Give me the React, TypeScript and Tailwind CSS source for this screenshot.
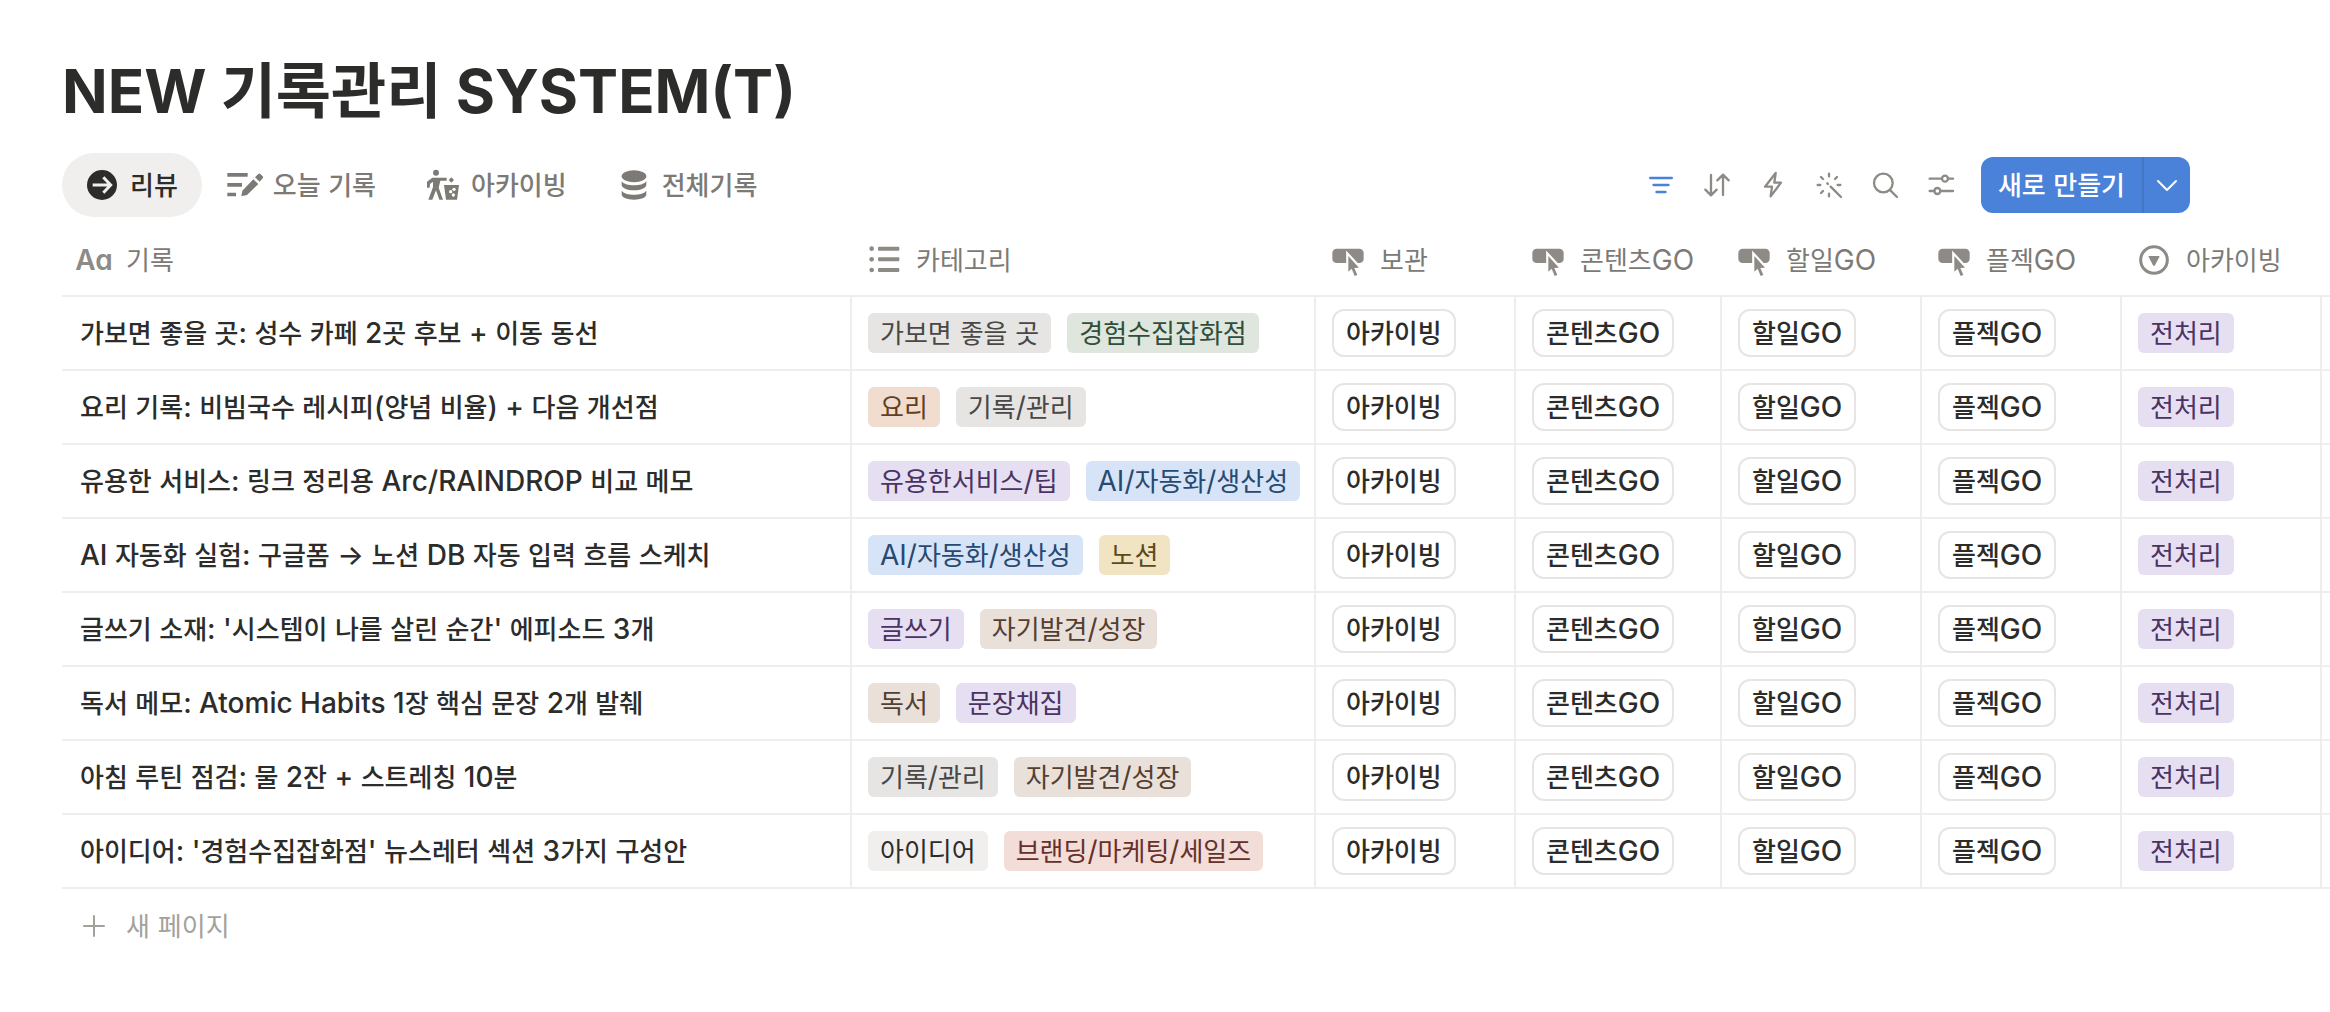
import type { ReactNode } from "react";

/** Sets Hangul runs slightly smaller than the Latin text around them, so both look the same size. */
function Mixed({ text, hangul = "text-[26px]" }: { text: string; hangul?: string }) {
  return (
    <>
      {text
        .split(/([가-힣]+)/)
        .filter(Boolean)
        .map((run, i) =>
          /[가-힣]/.test(run) ? (
            <span key={i} className={hangul}>
              {run}
            </span>
          ) : (
            run
          ),
        )}
    </>
  );
}

function ArrowCircleIcon() {
  return (
    <svg viewBox="0 0 108 108" className="size-9 shrink-0" aria-hidden="true">
      <circle cx="54" cy="54" r="45" fill="currentColor" />
      <path d="M26 54H78M58 31L80 54L58 77" fill="none" stroke="#f0efed" strokeWidth="9" />
    </svg>
  );
}

function EditListIcon() {
  return (
    <svg viewBox="0 0 108 108" className="size-9 shrink-0" fill="currentColor" aria-hidden="true">
      <path d="M1 18H62V29H1ZM1 48H45V59H1ZM1 77H27V88H1Z" />
      <path d="M43 88L46 71L79 37L94 51L60 84Z" />
      <path d="M84 31L94 21Q97 18 100 21L107 28Q110 31 107 34L98 44Z" />
    </svg>
  );
}

function PersonBinIcon() {
  return (
    <svg viewBox="0 0 108 108" className="size-9 shrink-0" fill="currentColor" aria-hidden="true">
      <circle cx="33" cy="17" r="9" />
      <path d="M22 32H65V41H46L41 62L54 98H43L33 70L22 98H10L24 60V44L15 51L14 62H6V44Z" />
      <path d="M79 31L87 39L79 47L71 39Z" />
      <path d="M57 54H102L96 98H63Z" />
      <circle cx="87" cy="67" r="5" fill="white" />
      <circle cx="77" cy="74" r="5" fill="white" />
      <circle cx="85" cy="84" r="5" fill="white" />
    </svg>
  );
}

function DatabaseIcon() {
  return (
    <svg viewBox="0 0 108 108" className="size-9 shrink-0" fill="currentColor" aria-hidden="true">
      <ellipse cx="54" cy="28" rx="37" ry="18" />
      <path d="M17 43C24 52 38 55 54 55C70 55 84 52 91 43V54C91 63 74 70 54 70C34 70 17 63 17 54Z" />
      <path d="M17 71C24 80 38 83 54 83C70 83 84 80 91 71V82C91 92 74 98 54 98C34 98 17 92 17 82Z" />
    </svg>
  );
}

function ToolIcon({ children }: { children: ReactNode }) {
  return (
    <svg
      viewBox="0 0 84 84"
      className="size-7"
      fill="none"
      stroke="currentColor"
      strokeWidth="7"
      strokeLinecap="round"
      strokeLinejoin="round"
      aria-hidden="true"
    >
      {children}
    </svg>
  );
}

function ButtonPropIcon() {
  return (
    <svg viewBox="0 0 96 96" className="size-8 shrink-0" fill="currentColor" aria-hidden="true">
      <rect x="1" y="14" width="94" height="43" rx="13" />
      <path
        d="M49 36V83L59 74L68 96L76 93L67 72L81 71Z"
        stroke="white"
        strokeWidth="13"
        strokeLinejoin="miter"
      />
      <path d="M49 36V83L59 74L68 96L76 93L67 72L81 71Z" />
    </svg>
  );
}

function ListIcon() {
  return (
    <svg viewBox="0 0 96 96" className="size-8 shrink-0" fill="currentColor" aria-hidden="true">
      <circle cx="11" cy="14" r="7" />
      <circle cx="11" cy="46" r="7" />
      <circle cx="11" cy="78" r="7" />
      <rect x="30" y="8" width="64" height="12" rx="3" />
      <rect x="30" y="40" width="64" height="12" rx="3" />
      <rect x="30" y="72" width="64" height="12" rx="3" />
    </svg>
  );
}

function SelectIcon() {
  return (
    <svg viewBox="0 0 96 96" className="size-8 shrink-0" aria-hidden="true">
      <circle cx="48" cy="48" r="40" fill="none" stroke="currentColor" strokeWidth="9" />
      <path d="M33 36H63Q66 36 64 39L51 64Q48 68 45 64L32 39Q30 36 33 36Z" fill="currentColor" />
    </svg>
  );
}

function TitleIcon() {
  return (
    <span
      aria-hidden="true"
      className="flex w-8 shrink-0 justify-center text-[28px] font-semibold [font-feature-settings:'cv11']"
    >
      Aa
    </span>
  );
}

const tabs = [
  { label: "리뷰", icon: <ArrowCircleIcon />, active: true },
  { label: "오늘 기록", icon: <EditListIcon />, active: false },
  { label: "아카이빙", icon: <PersonBinIcon />, active: false },
  { label: "전체기록", icon: <DatabaseIcon />, active: false },
];

const tools = [
  { label: "필터", active: true, shape: <path d="M10 21H74M20 42H64M29 63H55" strokeWidth="8" /> },
  { label: "정렬", active: false, shape: <path d="M24 12V72M7 56L24 73L41 56M60 72V12M43 28L60 11L77 28" /> },
  { label: "자동화", active: false, shape: <path d="M50 6L18 47H39L35 76L66 35H46Z" /> },
  {
    label: "AI",
    active: false,
    shape: (
      <path d="M42 8V16M42 68V76M8 42H16M68 42H76M18 18L24 24M66 18L60 24M18 66L24 60M37 37L39 39M47 47L78 78" />
    ),
  },
  {
    label: "검색",
    active: false,
    shape: (
      <>
        <circle cx="37" cy="36" r="28" />
        <path d="M58 58L78 78" />
      </>
    ),
  },
  {
    label: "설정",
    active: false,
    shape: (
      <>
        <circle cx="54" cy="23" r="9" />
        <circle cx="31" cy="60" r="9" />
        <path d="M8 23H45M63 23H78M8 60H22M40 60H78" />
      </>
    ),
  },
];

const columns = [
  { label: "기록", icon: <TitleIcon /> },
  { label: "카테고리", icon: <ListIcon /> },
  { label: "보관", icon: <ButtonPropIcon /> },
  { label: "콘텐츠GO", icon: <ButtonPropIcon /> },
  { label: "할일GO", icon: <ButtonPropIcon /> },
  { label: "플젝GO", icon: <ButtonPropIcon /> },
  { label: "아카이빙", icon: <SelectIcon /> },
];

const tagColors = {
  gray: "bg-[#e6e5e3] text-[#494846]",
  light: "bg-[#f0efed] text-[#2c2c2b]",
  green: "bg-[#dfe6dd] text-[#2f4f3b]",
  orange: "bg-[#f0ddcf] text-[#633f1d]",
  purple: "bg-[#e6dff1] text-[#493364]",
  blue: "bg-[#d7e4f7] text-[#264a72]",
  yellow: "bg-[#f0e4c3] text-[#5c4a1c]",
  brown: "bg-[#eae0da] text-[#533f31]",
  red: "bg-[#f3ddd9] text-[#66302a]",
};

type Tag = [string, keyof typeof tagColors];

const rows: { title: string; tags: Tag[] }[] = [
  { title: "가보면 좋을 곳: 성수 카페 2곳 후보 + 이동 동선", tags: [["가보면 좋을 곳", "gray"], ["경험수집잡화점", "green"]] },
  { title: "요리 기록: 비빔국수 레시피(양념 비율) + 다음 개선점", tags: [["요리", "orange"], ["기록/관리", "gray"]] },
  { title: "유용한 서비스: 링크 정리용 Arc/RAINDROP 비교 메모", tags: [["유용한서비스/팁", "purple"], ["AI/자동화/생산성", "blue"]] },
  { title: "AI 자동화 실험: 구글폼 → 노션 DB 자동 입력 흐름 스케치", tags: [["AI/자동화/생산성", "blue"], ["노션", "yellow"]] },
  { title: "글쓰기 소재: '시스템이 나를 살린 순간' 에피소드 3개", tags: [["글쓰기", "purple"], ["자기발견/성장", "brown"]] },
  { title: "독서 메모: Atomic Habits 1장 핵심 문장 2개 발췌", tags: [["독서", "brown"], ["문장채집", "purple"]] },
  { title: "아침 루틴 점검: 물 2잔 + 스트레칭 10분", tags: [["기록/관리", "gray"], ["자기발견/성장", "brown"]] },
  { title: "아이디어: '경험수집잡화점' 뉴스레터 섹션 3가지 구성안", tags: [["아이디어", "light"], ["브랜딩/마케팅/세일즈", "red"]] },
];

const actions = ["아카이빙", "콘텐츠GO", "할일GO", "플젝GO"];

function TagChip({ label, color }: { label: string; color: keyof typeof tagColors }) {
  return (
    <span className={`flex h-10 items-center rounded-md px-3 ${tagColors[color]}`}>
      <span>
        <Mixed text={label} />
      </span>
    </span>
  );
}

export default function App() {
  return (
    <main className="min-h-screen bg-white pt-12 pl-[62px] font-['Inter','Noto_Sans_CJK_KR',sans-serif] text-[28px] leading-10 whitespace-nowrap text-[#2c2c2b]">
      <h1 className="text-[60px] leading-[86px] font-bold">
        <Mixed text="NEW 기록관리 SYSTEM(T)" hangul="text-[60px]" />
      </h1>

      <div className="mt-[19px] flex items-center justify-between pr-[140px]">
        <div role="tablist" className="flex gap-[3px]">
          {tabs.map((tab) => (
            <button
              key={tab.label}
              type="button"
              role="tab"
              aria-selected={tab.active}
              className={`flex h-16 items-center gap-[10px] rounded-full pr-6 pl-[22px] font-medium ${
                tab.active ? "bg-[#f0efed] text-[#2c2c2b]" : "text-[#7d7a75]"
              }`}
            >
              {tab.icon}
              <span>
                <Mixed text={tab.label} />
              </span>
            </button>
          ))}
        </div>

        <div className="flex items-center">
          {tools.map((tool) => (
            <button
              key={tool.label}
              type="button"
              aria-label={tool.label}
              className={`flex size-14 items-center justify-center ${
                tool.active ? "text-[#4a82da]" : "text-[#8e8b86]"
              }`}
            >
              <ToolIcon>{tool.shape}</ToolIcon>
            </button>
          ))}
          <div className="ml-3 flex h-14 overflow-hidden rounded-xl bg-[#4a82da] text-white">
            <button type="button" className="px-[17px] font-medium">
              <Mixed text="새로 만들기" />
            </button>
            <button
              type="button"
              aria-label="템플릿 선택"
              className="flex w-12 items-center justify-center border-l-2 border-[#4376c5]"
            >
              <svg viewBox="0 0 24 24" className="size-6" fill="none" aria-hidden="true">
                <path d="M3 8L12 17L21 8" stroke="currentColor" strokeWidth="2" strokeLinecap="round" strokeLinejoin="round" />
              </svg>
            </button>
          </div>
        </div>
      </div>

      <div className="mt-2 overflow-x-auto">
        <table className="w-full table-fixed border-separate border-spacing-0">
          <colgroup>
            <col className="w-[790px]" />
            <col className="w-[464px]" />
            <col className="w-[200px]" />
            <col className="w-[206px]" />
            <col className="w-[200px]" />
            <col className="w-[200px]" />
            <col className="w-[200px]" />
            <col />
          </colgroup>
          <thead>
            <tr className="*:border-b-2 *:border-[#eeeeed]">
              {columns.map((column, i) => (
                <th key={i} scope="col" className="h-[72px] p-0 pl-4 text-left font-normal text-[#7d7a75]">
                  <span className="flex items-center gap-4">
                    <span className="flex text-[#8e8b86]">{column.icon}</span>
                    <span>
                      <Mixed text={column.label} />
                    </span>
                  </span>
                </th>
              ))}
              <td className="p-0" />
            </tr>
          </thead>
          <tbody>
            {rows.map((row) => (
              <tr key={row.title} className="*:border-b-2 *:border-[#eeeeed]">
                <td className="h-[74px] border-r-2 p-0 pl-[18px] font-medium">
                  <Mixed text={row.title} />
                </td>
                <td className="border-r-2 p-0 pl-4">
                  <div className="flex gap-4">
                    {row.tags.map(([label, color]) => (
                      <TagChip key={label} label={label} color={color} />
                    ))}
                  </div>
                </td>
                {actions.map((action) => (
                  <td key={action} className="border-r-2 p-0 pl-4">
                    <button
                      type="button"
                      className="flex h-12 items-center rounded-xl border-2 border-[#e6e5e3] px-3 font-medium"
                    >
                      <span>
                        <Mixed text={action} />
                      </span>
                    </button>
                  </td>
                ))}
                <td className="border-r-2 p-0 pl-4">
                  <div className="flex">
                    <TagChip label="전처리" color="purple" />
                  </div>
                </td>
                <td className="p-0" />
              </tr>
            ))}
          </tbody>
        </table>
      </div>

      <button type="button" className="flex h-[74px] items-center gap-5 pl-5 text-[#a4a19b]">
        <svg viewBox="0 0 24 24" className="size-6" aria-hidden="true">
          <path d="M12 2V22M2 12H22" stroke="currentColor" strokeWidth="2" strokeLinecap="round" />
        </svg>
        <span>
          <Mixed text="새 페이지" />
        </span>
      </button>
    </main>
  );
}
